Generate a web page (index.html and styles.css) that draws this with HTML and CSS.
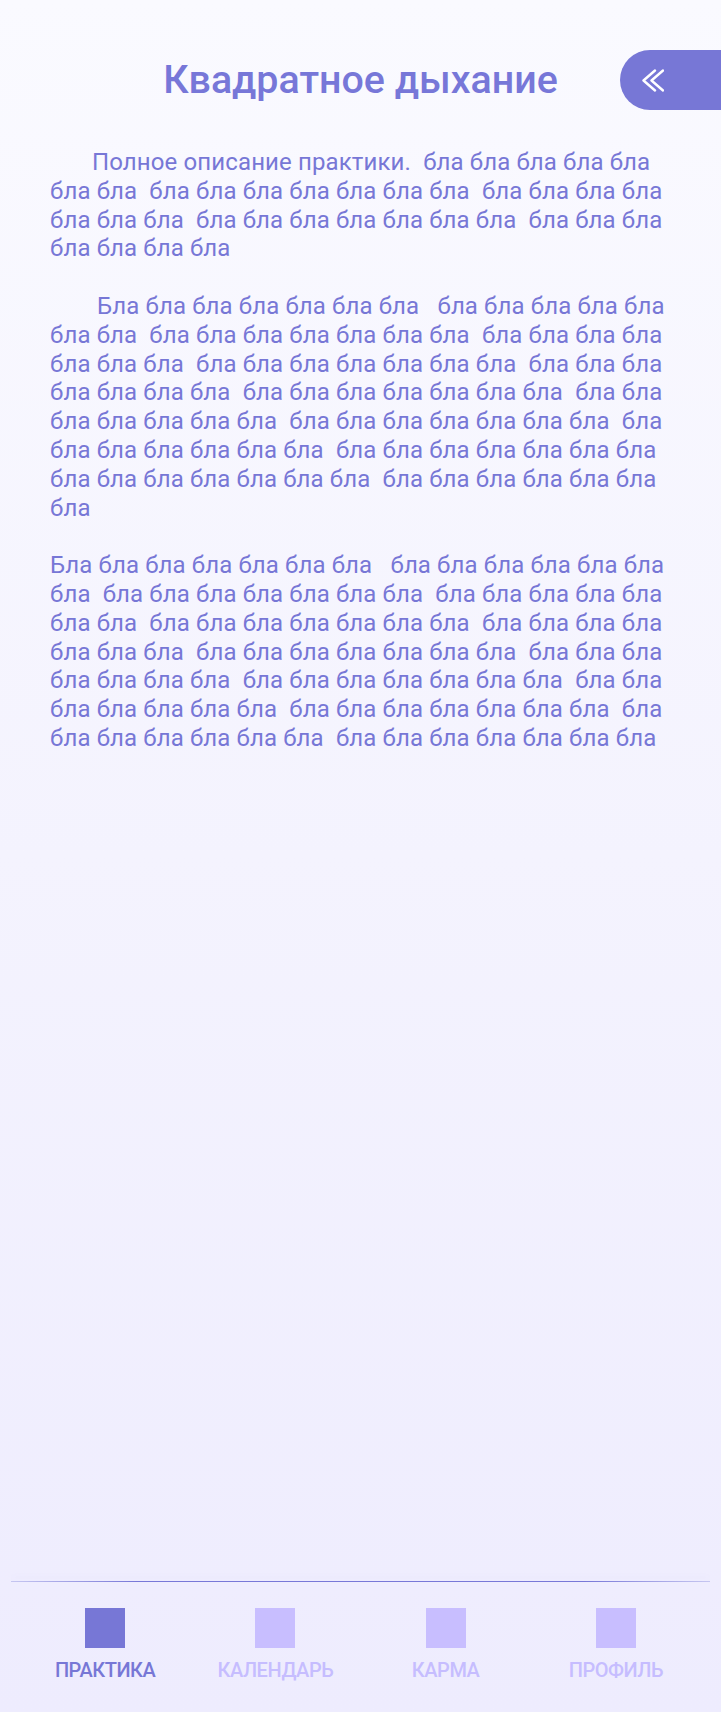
FILE: index.html
```html
<!DOCTYPE html>
<html lang="ru">
<head>
<meta charset="utf-8">
<title>Квадратное дыхание</title>
<link rel="stylesheet" href="styles.css">
</head>
<body>
<div class="page">
  <header class="header">
    <h1 class="title">Квадратное дыхание</h1>
    <button class="back" type="button" aria-label="Назад">
      <svg width="22" height="23" viewBox="0 0 22 23" fill="none" stroke="#ffffff" stroke-width="2.4" stroke-linecap="round" stroke-linejoin="round">
        <polyline points="13,1.5 1.5,11.5 13,21.5"/>
        <polyline points="21,1.5 9.5,11.5 21,21.5"/>
      </svg>
    </button>
  </header>

  <main class="content">
    <p class="para indent-a">Полное описание практики.  бла бла бла бла бла бла бла  бла бла бла бла бла бла бла  бла бла бла бла бла бла бла  бла бла бла бла бла бла бла  бла бла бла бла бла бла бла</p>
    <p class="para indent-b">Бла бла бла бла бла бла бла   бла бла бла бла бла бла бла  бла бла бла бла бла бла бла  бла бла бла бла бла бла бла  бла бла бла бла бла бла бла  бла бла бла бла бла бла бла  бла бла бла бла бла бла бла  бла бла бла бла бла бла бла  бла бла бла бла бла бла бла  бла бла бла бла бла бла бла  бла бла бла бла бла бла бла  бла бла бла бла бла бла бла  бла бла бла бла бла бла бла</p>
    <p class="para">Бла бла бла бла бла бла бла   бла бла бла бла бла бла бла  бла бла бла бла бла бла бла  бла бла бла бла бла бла бла  бла бла бла бла бла бла бла  бла бла бла бла бла бла бла  бла бла бла бла бла бла бла  бла бла бла бла бла бла бла  бла бла бла бла бла бла бла  бла бла бла бла бла бла бла  бла бла бла бла бла бла бла  бла бла бла бла бла бла бла  бла бла бла бла бла бла бла</p>
  </main>

  <nav class="nav">
    <div class="nav-line"></div>
    <div class="nav-items">
      <a class="nav-item active" href="#"><span class="nav-icon"></span><span class="nav-label">ПРАКТИКА</span></a>
      <a class="nav-item" href="#"><span class="nav-icon"></span><span class="nav-label">КАЛЕНДАРЬ</span></a>
      <a class="nav-item" href="#"><span class="nav-icon"></span><span class="nav-label">КАРМА</span></a>
      <a class="nav-item" href="#"><span class="nav-icon"></span><span class="nav-label">ПРОФИЛЬ</span></a>
    </div>
  </nav>
</div>
</body>
</html>
```

FILE: styles.css
```css
* { box-sizing: border-box; }

html, body {
  margin: 0;
  padding: 0;
}

body {
  font-family: Roboto, "Noto Sans", "Liberation Sans", sans-serif;
  background: linear-gradient(180deg, #fafaff 0%, #f4f3fe 50%, #eeecfe 100%);
  color: #7777d6;
}

.page {
  min-height: 1712px;
  display: flex;
  flex-direction: column;
}

.header {
  display: grid;
  grid-template-columns: 1fr auto 1fr;
  align-items: center;
  padding-top: 50px;
}

.title {
  grid-column: 2;
  margin: 0;
  font-size: 39.4px;
  font-weight: 500;
  line-height: 60px;
  color: #7777d8;
  white-space: nowrap;
}

.back {
  grid-column: 3;
  justify-self: end;
  width: 101px;
  height: 60px;
  border: none;
  border-radius: 30px 0 0 30px;
  background: #7777d6;
  padding: 0 0 0 22px;
  display: flex;
  align-items: center;
  cursor: pointer;
}

.back svg { display: block; }

.content {
  padding: 38px 36px 0 50px;
}

.para {
  margin: 0 0 28.8px;
  font-size: 24px;
  line-height: 1.2;
  letter-spacing: 0.12px;
  white-space: pre-wrap;
}

.indent-a { text-indent: 42px; }
.indent-b { text-indent: 47px; }

.nav {
  margin-top: auto;
}

.nav-line {
  height: 1px;
  margin: 0 11px;
  background: linear-gradient(90deg, #c6c6f1 0%, #7878d8 18%, #7878d8 82%, #c6c6f1 100%);
  box-shadow: 0 -4px 6px rgba(120, 120, 216, 0.07);
}

.nav-items {
  display: grid;
  grid-template-columns: repeat(4, 1fr);
  padding: 26px 20px 30px;
}

.nav-item {
  display: flex;
  flex-direction: column;
  align-items: center;
  text-decoration: none;
  color: #c6bdff;
}

.nav-icon {
  width: 40px;
  height: 40px;
  background: #c8beff;
}

.nav-label {
  margin-top: 10px;
  font-size: 20px;
  line-height: 24px;
  font-weight: 500;
  letter-spacing: -0.45px;
}

.nav-item.active { color: #7777d6; }
.nav-item.active .nav-icon { background: #7777d6; }
```
